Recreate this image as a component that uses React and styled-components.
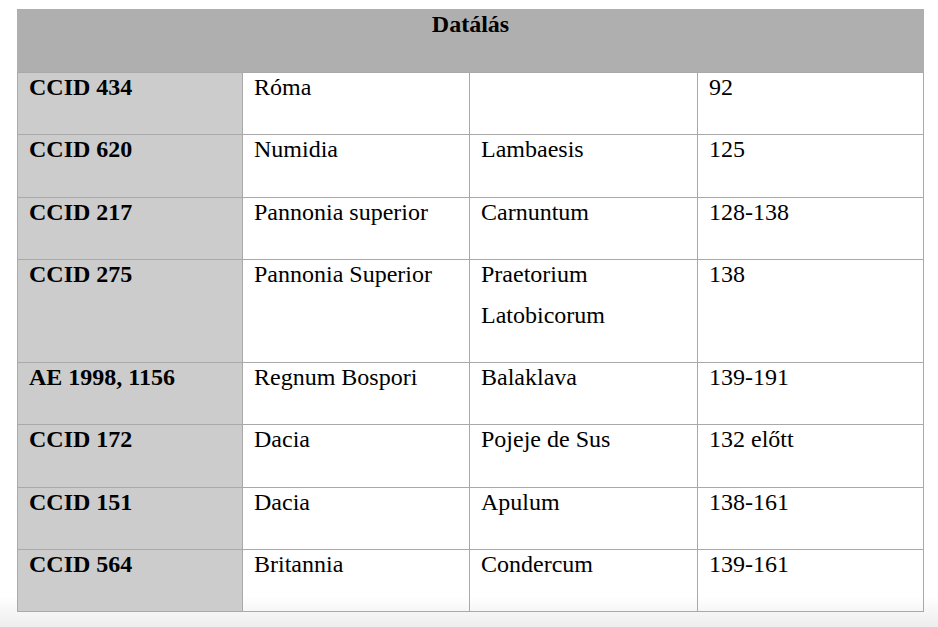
import styled, { createGlobalStyle } from 'styled-components';

const GlobalStyle = createGlobalStyle`
  html {
    height: 100%;
    background: linear-gradient(to bottom, #fff 0, #fff 596px, #ededed 627px);
  }

  body {
    margin: 9px 0 0 17px;
    font-family: 'Liberation Serif', 'Times New Roman', serif;
    color: #000;
  }
`;

const StyledTable = styled.table`
  width: 906px;
  table-layout: fixed;
  border-collapse: collapse;
  font-family: 'Liberation Serif', 'Times New Roman', serif;
  font-size: 24px;
  color: #000;
`;

const Col = styled.col`
  width: ${(props) => props.$width}px;
`;

const HeaderCell = styled.th`
  background-color: #afafaf;
  border: 1px solid #afafaf;
  border-bottom-color: #a9a9a9;
  padding: 0 12px 27px 12px;
  font-weight: 700;
  text-align: center;
  vertical-align: top;
`;

const Cell = styled.td`
  border: 1px solid #a9a9a9;
  background-color: ${(props) => (props.$label ? '#cccccc' : 'transparent')};
  font-weight: ${(props) => (props.$label ? 700 : 400)};
  padding: 0 12px 26.3px 11px;
  vertical-align: top;
`;

const Text = styled.div`
  line-height: 41px;
  margin-top: -6px;
`;

const columns = [225, 227, 228, 226];

const rows = [
  ['CCID 434', 'Róma', '', '92'],
  ['CCID 620', 'Numidia', 'Lambaesis', '125'],
  ['CCID 217', 'Pannonia superior', 'Carnuntum', '128-138'],
  ['CCID 275', 'Pannonia Superior', 'Praetorium Latobicorum', '138'],
  ['AE 1998, 1156', 'Regnum Bospori', 'Balaklava', '139-191'],
  ['CCID 172', 'Dacia', 'Pojeje de Sus', '132 előtt'],
  ['CCID 151', 'Dacia', 'Apulum', '138-161'],
  ['CCID 564', 'Britannia', 'Condercum', '139-161'],
];

function App() {
  return (
    <>
      <GlobalStyle />
      <StyledTable>
        <colgroup>
          {columns.map((width, i) => (
            <Col key={i} $width={width} />
          ))}
        </colgroup>
        <thead>
          <tr>
            <HeaderCell colSpan={4}>
              <Text>Datálás</Text>
            </HeaderCell>
          </tr>
        </thead>
        <tbody>
          {rows.map((row) => (
            <tr key={row[0]}>
              {row.map((value, i) => (
                <Cell key={i} $label={i === 0}>
                  <Text>{value}</Text>
                </Cell>
              ))}
            </tr>
          ))}
        </tbody>
      </StyledTable>
    </>
  );
}

export default App;
